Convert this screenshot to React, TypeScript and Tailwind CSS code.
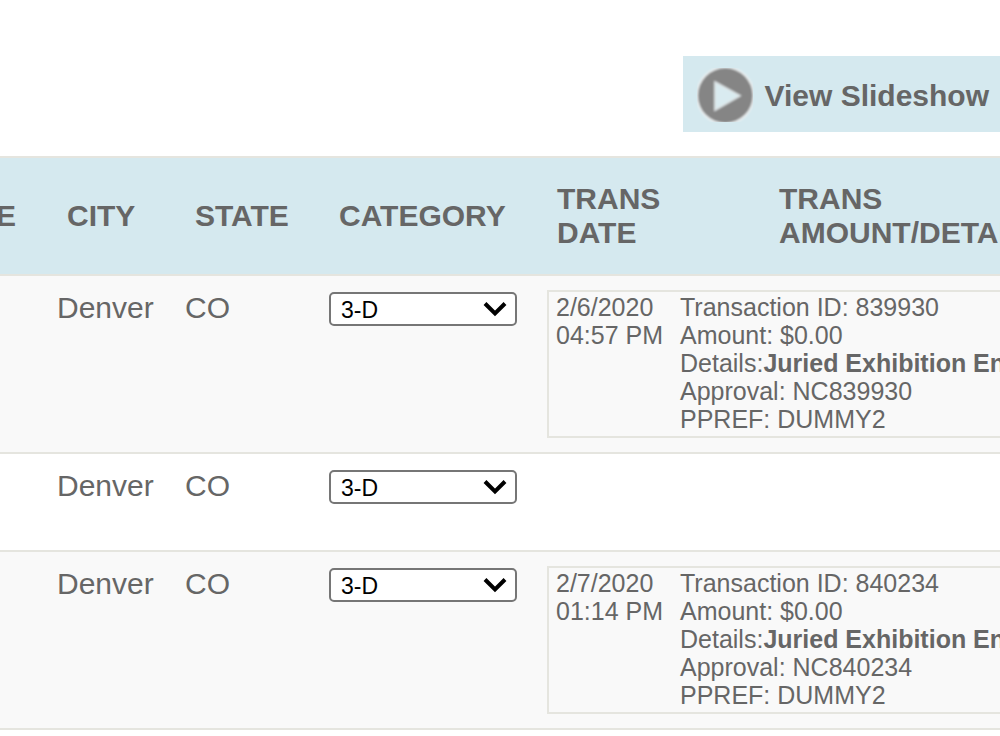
import React from "react";

type Transaction = {
  date: string;
  time: string;
  id: string;
  amount: string;
  details: string;
  approval: string;
  ppref: string;
};

type Entry = {
  key: string;
  city: string;
  state: string;
  category: string;
  transaction?: Transaction;
};

const entries: Entry[] = [
  {
    key: "entry-1",
    city: "Denver",
    state: "CO",
    category: "3-D",
    transaction: {
      date: "2/6/2020",
      time: "04:57 PM",
      id: "839930",
      amount: "$0.00",
      details: "Juried Exhibition Entry",
      approval: "NC839930",
      ppref: "DUMMY2",
    },
  },
  { key: "entry-2", city: "Denver", state: "CO", category: "3-D" },
  {
    key: "entry-3",
    city: "Denver",
    state: "CO",
    category: "3-D",
    transaction: {
      date: "2/7/2020",
      time: "01:14 PM",
      id: "840234",
      amount: "$0.00",
      details: "Juried Exhibition Entry",
      approval: "NC840234",
      ppref: "DUMMY2",
    },
  },
];

function PlayIcon() {
  return (
    <svg viewBox="0 0 56 56" className="size-14 shrink-0" aria-hidden="true">
      <defs>
        <filter id="soft" x="-10%" y="-10%" width="120%" height="120%">
          <feGaussianBlur stdDeviation="0.8" />
        </filter>
        <clipPath id="frame">
          <rect width="56" height="54" />
        </clipPath>
      </defs>
      <g clipPath="url(#frame)">
        <g filter="url(#soft)">
          <circle cx="28.3" cy="27.5" r="29.2" fill="#eef1f2" />
          <circle cx="28.3" cy="27.5" r="27.4" fill="#858585" />
          <path d="M18 14 L43 27.7 L18 42 Z" fill="#d9ebf0" stroke="#dfe5e7" strokeWidth="1.6" />
        </g>
      </g>
    </svg>
  );
}

function CategorySelect({ value, label }: { value: string; label: string }) {
  return (
    <div className="relative w-[188px]">
      <select
        aria-label={label}
        defaultValue={value}
        className="block h-[34px] w-full appearance-none rounded-[5px] border-2 border-[#767676] bg-white pt-0.5 pl-2.5 text-[23px] leading-7 text-black"
      >
        <option value="3-D">3-D</option>
        <option value="2-D">2-D</option>
      </select>
      <svg
        viewBox="0 0 24 16"
        className="pointer-events-none absolute top-[9px] right-[10px] h-4 w-6"
        aria-hidden="true"
      >
        <path d="M2 2.5 L12 12.5 L22 2.5" fill="none" stroke="#000" strokeWidth="4" />
      </svg>
    </div>
  );
}

function TransactionBox({ transaction }: { transaction: Transaction }) {
  return (
    <table className="w-full table-fixed border-separate border-spacing-0 border-2 border-[#e5e5df] text-[25px] leading-7">
      <colgroup>
        <col className="w-[131px]" />
        <col />
      </colgroup>
      <tbody>
        <tr className="align-top whitespace-nowrap">
          <td className="pt-px pb-[3px] pl-[7px]">
            <div>{transaction.date}</div>
            <div>{transaction.time}</div>
          </td>
          <td className="pt-px pb-[3px]">
            <div>Transaction ID: {transaction.id}</div>
            <div>Amount: {transaction.amount}</div>
            <div>
              Details:<b>{transaction.details}</b>
            </div>
            <div>Approval: {transaction.approval}</div>
            <div>PPREF: {transaction.ppref}</div>
          </td>
        </tr>
      </tbody>
    </table>
  );
}

export default function App() {
  return (
    <main className="min-h-screen overflow-hidden bg-white pt-14 font-['Liberation_Sans',Arial,sans-serif] text-[30px] leading-[34px] text-[#666666]">
      <div className="mb-6 flex justify-end">
        <button
          type="button"
          className="flex h-[76px] items-center gap-[11px] bg-[#d5e9ef] pt-1 pr-[11px] pl-3.5 font-bold whitespace-nowrap"
        >
          <PlayIcon />
          View Slideshow
        </button>
      </div>

      <table className="-ml-5 w-[130%] table-fixed border-separate border-spacing-0">
        <colgroup>
          <col className="w-[67px]" />
          <col className="w-32" />
          <col className="w-36" />
          <col className="w-[218px]" />
          <col className="w-[222px]" />
          <col />
        </colgroup>
        <thead>
          <tr className="bg-[#d5e9ef] text-left *:h-[120px] *:border-y-2 *:border-[#e5e5df]">
            <th className="pr-[31px] text-right">E</th>
            <th className="pl-5">CITY</th>
            <th className="pl-5">STATE</th>
            <th className="pl-5">CATEGORY</th>
            <th className="pl-5">
              TRANS
              <br />
              DATE
            </th>
            <th className="pl-5">
              TRANS
              <br />
              AMOUNT/DETAILS
            </th>
          </tr>
        </thead>
        <tbody>
          {entries.map((entry, index) => (
            <tr
              key={entry.key}
              className="h-[98px] align-top odd:bg-[#f9f9f9] even:bg-white *:border-b-2 *:border-[#e5e5df]"
            >
              <td />
              <td className="px-2.5 pt-[15px]">{entry.city}</td>
              <td className="px-2.5 pt-[15px]">{entry.state}</td>
              <td className="px-2.5 py-4">
                <CategorySelect value={entry.category} label={`Category for entry ${index + 1}`} />
              </td>
              <td colSpan={2} className="px-2.5 py-3.5">
                {entry.transaction && <TransactionBox transaction={entry.transaction} />}
              </td>
            </tr>
          ))}
        </tbody>
      </table>
    </main>
  );
}
